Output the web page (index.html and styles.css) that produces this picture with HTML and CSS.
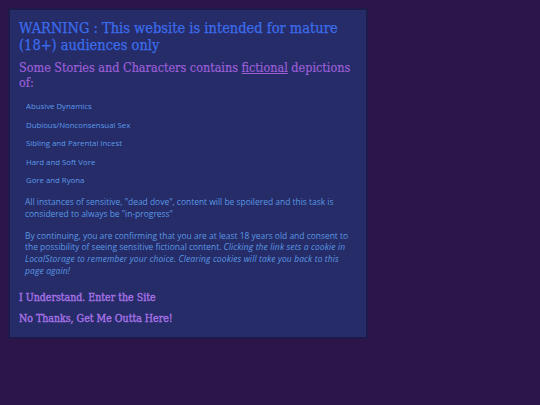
FILE: index.html
```html
<!DOCTYPE html>
<html lang="en">
<head>
<meta charset="utf-8">
<title>Content Warning</title>
<link rel="stylesheet" href="styles.css">
</head>
<body>
<main class="gate">
  <h1 class="gate-title">WARNING : This website is intended for mature (18+) audiences only</h1>
  <h2 class="gate-sub">Some Stories and Characters contains <u>fictional</u> depictions of:</h2>
  <ul class="gate-list">
    <li>Abusive Dynamics</li>
    <li>Dubious/Nonconsensual Sex</li>
    <li>Sibling and Parental Incest</li>
    <li>Hard and Soft Vore</li>
    <li>Gore and Ryona</li>
  </ul>
  <p class="gate-text">All instances of sensitive, "dead dove", content will be spoilered and this task is considered to always be "in-progress"</p>
  <p class="gate-text">By continuing, you are confirming that you are at least 18 years old and consent to the possibility of seeing sensitive fictional content. <em>Clicking the link sets a cookie in LocalStorage to remember your choice. Clearing cookies will take you back to this page again!</em></p>
  <a class="gate-link" href="#enter">I Understand. Enter the Site</a>
  <a class="gate-link" href="#leave">No Thanks, Get Me Outta Here!</a>
</main>
</body>
</html>
```

FILE: styles.css
```css
html, body {
  margin: 0;
  background: #2c1549;
}
body {
  padding: 8px;
  min-height: 405px;
  box-sizing: border-box;
}
.gate {
  width: 360px;
  box-sizing: border-box;
  background: #262c68;
  border: 2px solid #1d1a4a;
  padding: 10px 9px 8px 9px;
  display: flex;
  flex-direction: column;
}
.gate-title,
.gate-sub,
.gate-link {
  font-family: "DejaVu Serif Condensed", "DejaVu Serif", serif;
  font-stretch: condensed;
}
.gate-title {
  font-weight: normal;
  font-size: 14.5px;
  line-height: 17px;
  color: #3c6cec;
  -webkit-text-stroke: 0.25px #3c6cec;
  margin: 0 0 6px 0;
}
.gate-sub {
  font-weight: normal;
  font-size: 12.5px;
  line-height: 15px;
  color: #9c5fd8;
  -webkit-text-stroke: 0.2px #9c5fd8;
  margin: 0 0 7px 0;
}
.gate-sub u {
  text-decoration-thickness: 1px;
  text-underline-offset: 1px;
}
.gate-list {
  list-style: none;
  margin: 0 0 6px 0;
  padding: 0 0 0 7px;
  font-family: "Open Sans", sans-serif;
  font-size: 7.8px;
  color: #5c9ae8;
}
.gate-list li {
  line-height: 10px;
  padding: 4px 0 4.6px;
}
.gate-text {
  font-family: "Open Sans", sans-serif;
  font-size: 8.45px;
  line-height: 11.8px;
  color: #5a98e2;
  margin: 0 0 10px 0;
  padding-left: 6px;
}
.gate-text em {
  letter-spacing: 0.15px;
}
.gate-link {
  font-weight: normal;
  font-size: 10.5px;
  line-height: 21px;
  color: #a772e6;
  -webkit-text-stroke: 0.35px #a772e6;
  text-decoration: none;
  align-self: flex-start;
}
```
